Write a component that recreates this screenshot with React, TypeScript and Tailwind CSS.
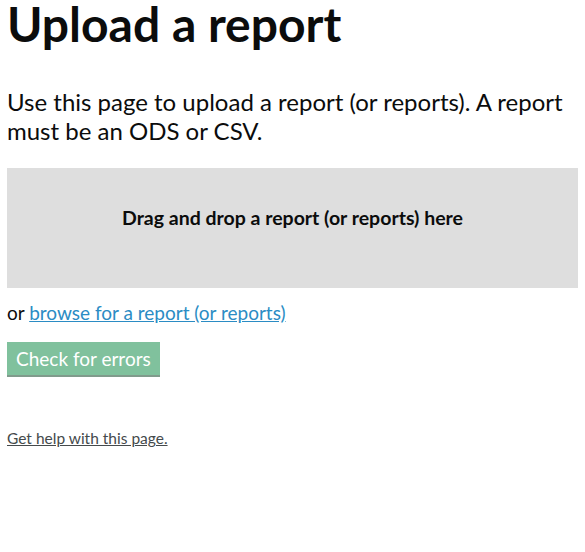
export default function App() {
  return (
    <div className="min-h-[552px] bg-white px-[7px] text-[#0b0c0c] [font-family:Lato,sans-serif]">
      <h1 className="text-[48px] font-bold leading-[48px]">Upload a report</h1>

      <p className="mt-[39px] text-[24px] leading-[29px]">
        Use this page to upload a report (or reports). A report must be an ODS or CSV.
      </p>

      <div className="mt-[23px] flex h-[120px] justify-center bg-[#dedede] pt-[38px]">
        <span className="text-[19.5px] font-bold leading-[24px]">Drag and drop a report (or reports) here</span>
      </div>

      <p className="mt-[12px] text-[19px] leading-[25px]">
        or{' '}
        <a href="#" className="text-[#2b8cc4] underline">
          browse for a report (or reports)
        </a>
      </p>

      <button
        disabled
        className="mt-[17px] h-[33px] bg-[#80c19d] px-[9px] text-[19px] leading-[25px] text-white shadow-[0_2px_0_#809b8c]"
      >
        Check for errors
      </button>

      <p className="mt-[53px] text-[15.5px] leading-[20px]">
        <a href="#" className="text-[#454a4c] underline">
          Get help with this page.
        </a>
      </p>
    </div>
  );
}
